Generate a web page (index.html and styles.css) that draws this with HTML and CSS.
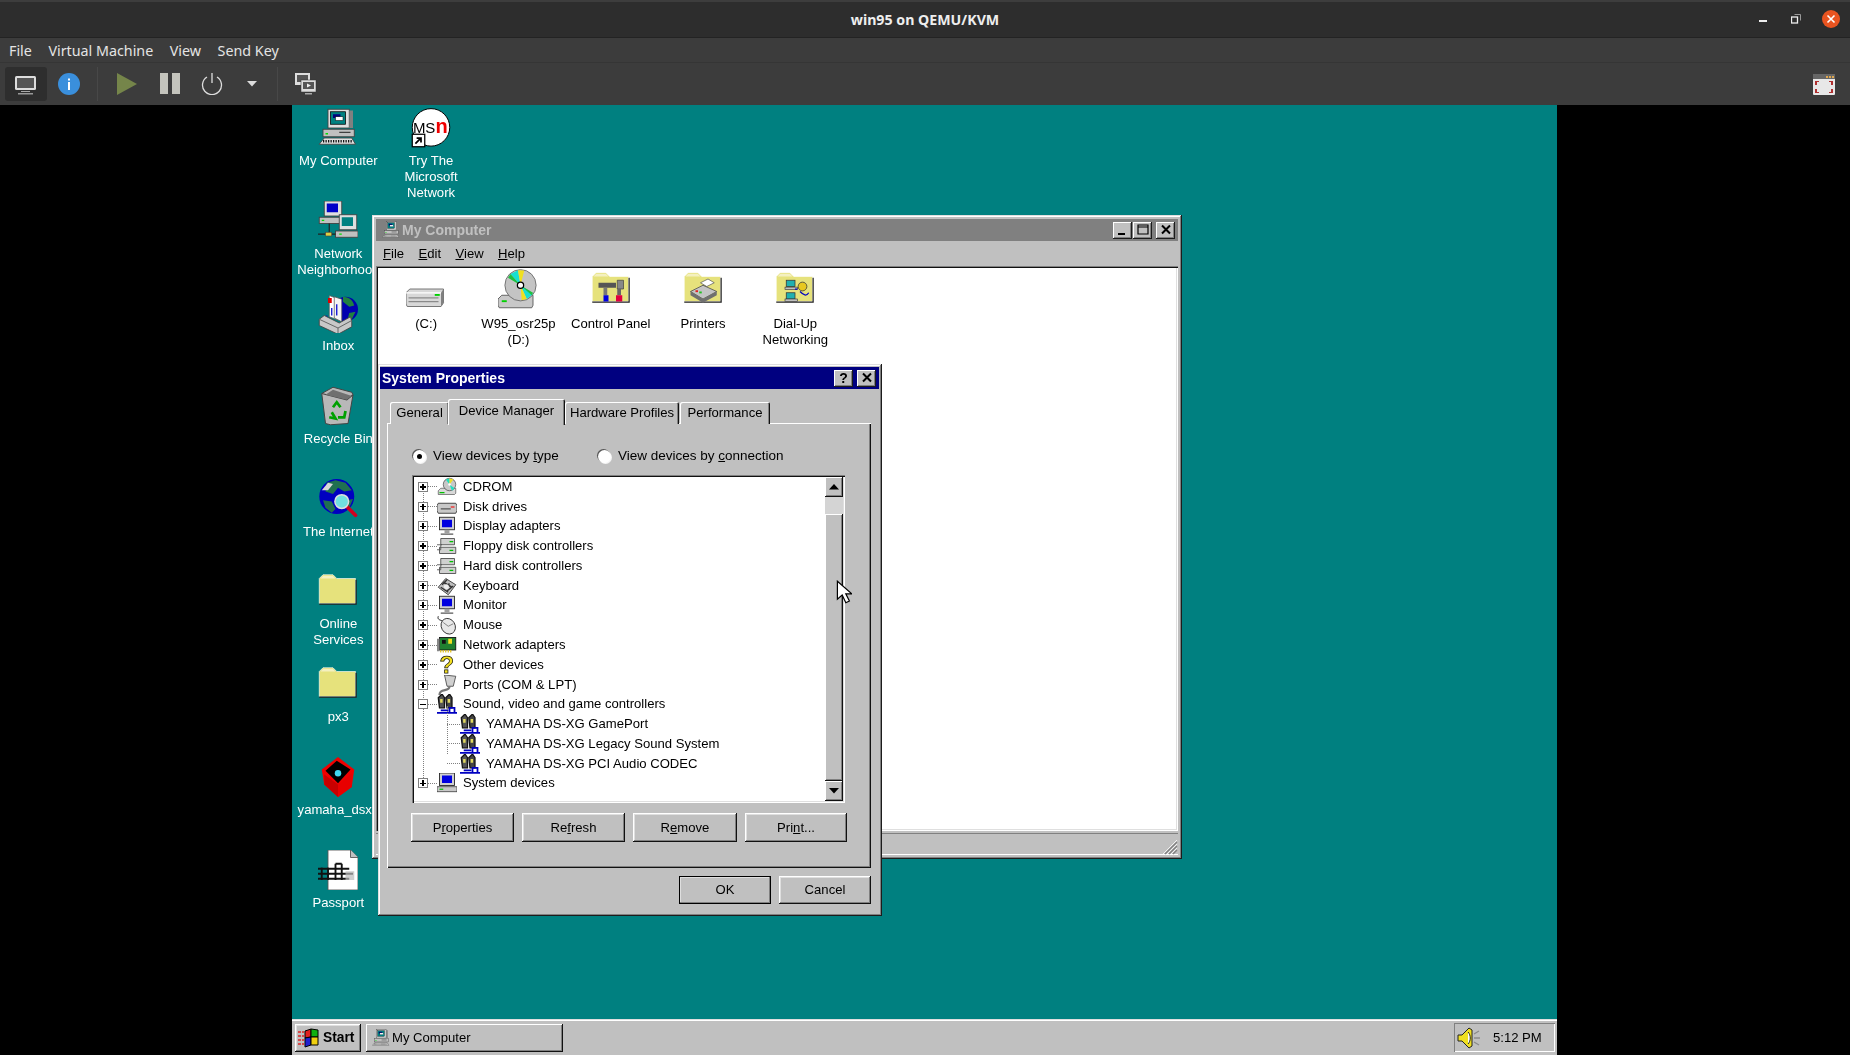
FILE: index.html
```html
<!DOCTYPE html>
<html lang="en">
<head>
    <meta charset="UTF-8">
    <title>win95 on QEMU/KVM</title>
    <link rel="stylesheet" href="styles.css">
</head>
<body>
    <!-- icon sheet -->
    <svg class="icon-sheet" xmlns="http://www.w3.org/2000/svg">
        <symbol id="i-computer" viewBox="0 0 32 32">
            <rect x="8" y="1" width="17" height="15" fill="#dfdfdf" stroke="#404040" stroke-width=".7"/>
            <rect x="25" y="2" width="3" height="14" fill="#808080"/>
            <rect x="10" y="3" width="12" height="10" fill="#008080" stroke="#000" stroke-width=".6"/>
            <rect x="12" y="5" width="6" height="3" fill="#000080"/>
            <rect x="14" y="7" width="6" height="3" fill="#fff" stroke="#000" stroke-width=".4"/>
            <rect x="4" y="17" width="25" height="6" fill="#c0c0c0" stroke="#404040" stroke-width=".7"/>
            <rect x="6" y="20" width="2" height="1.2" fill="#00e000"/>
            <rect x="17" y="19" width="9" height="1" fill="#404040"/>
            <path d="M5 24h22l3 5H1z" fill="#dfdfdf" stroke="#404040" stroke-width=".7"/>
            <path d="M4 26.6h23" stroke="#111" stroke-width="2" stroke-dasharray="1 1"/>
        </symbol>
        <symbol id="i-network" viewBox="0 0 32 32">
            <rect x="5" y="0" width="14" height="12" fill="#dfdfdf" stroke="#404040" stroke-width=".7"/>
            <rect x="7" y="2" width="9" height="7" fill="#0000c8"/>
            <rect x="1" y="13" width="18" height="5" fill="#c0c0c0" stroke="#404040" stroke-width=".7"/>
            <rect x="3" y="15" width="2" height="1" fill="#00e000"/>
            <rect x="17" y="11" width="14" height="12" fill="#dfdfdf" stroke="#404040" stroke-width=".7"/>
            <rect x="19" y="13" width="9" height="7" fill="#008080"/>
            <rect x="14" y="24" width="18" height="5" fill="#c0c0c0" stroke="#404040" stroke-width=".7"/>
            <rect x="17" y="26" width="2" height="1" fill="#00e000"/>
            <path d="M9 18v8M0 26.500h14" stroke="#222" stroke-width="1"/>
            <rect x="6" y="25" width="5" height="3" fill="#e0d040" stroke="#444" stroke-width=".5"/>
        </symbol>
        <symbol id="i-inbox" viewBox="0 0 32 32">
            <circle cx="22" cy="13" r="10" fill="#0000b0"/>
            <path d="M20 3c5 0 8 3 9 7l-4 1-5-4zM25 16l5-1-3 6-3-1z" fill="#208040"/>
            <path d="M9 2l8 3v17l-8-3z" fill="#fff" stroke="#555" stroke-width=".6"/>
            <path d="M13 3l6 2v18l-6-3z" fill="#f4f4f4" stroke="#555" stroke-width=".6"/>
            <path d="M8 4h3v4H8z" fill="#e00000"/>
            <path d="M15 9v9M11 12v6M7 18v5" stroke="#0000d0" stroke-width="1"/>
            <path d="M1 21l4-3 12 6 9-5 1 4v4l-11 6-15-7z" fill="#c8c8c8" stroke="#444" stroke-width=".7"/>
            <path d="M1 21l15 7 11-6M16 28v4" fill="none" stroke="#666" stroke-width=".8"/>
        </symbol>
        <symbol id="i-recycle" viewBox="0 0 32 32">
            <path d="M3 6L12 1l15 4 1 2-4 23-14 1-4-1z" fill="#b8b8b8" stroke="#444" stroke-width=".8"/>
            <path d="M3 6l20 5 5-4" fill="none" stroke="#444" stroke-width="1"/>
            <path d="M6 7l17 4 4-3-15-5z" fill="#707070"/>
            <path d="M12 17l3-4 3 4M22 20l-1 5-5 0M11 21l3 5-5-1" fill="none" stroke="#00a000" stroke-width="2.200"/>
        </symbol>
        <symbol id="i-internet" viewBox="0 0 32 32">
            <circle cx="15" cy="14" r="14" fill="#0000c0"/>
            <path d="M7 3l7-2 8 2 5 6-6 1-5-3-4 5-6-2zM4 17l7 1 3 6-3 3-5-4zM23 17l5-1-3 7-3-2z" fill="#207050"/>
            <path d="M3 9l5-6 4 1-4 5z" fill="#d8d8d8"/>
            <path d="M23 22l7 7" stroke="#d00020" stroke-width="3" stroke-linecap="round"/>
            <circle cx="19" cy="18" r="5.500" fill="#70e0e0" stroke="#ddd" stroke-width="1.200"/>
        </symbol>
        <symbol id="i-folder" viewBox="0 0 32 32">
            <path d="M1 6l3-3h8l3 3h15v20H1z" fill="#e6e27c" stroke="#fff" stroke-width=".5"/>
            <path d="M1 26h29V7h1v20H1z" fill="#222"/>
            <path d="M2 6l2-2h8l2 2z" fill="#f4f0c0"/>
        </symbol>
        <symbol id="i-yamaha" viewBox="0 0 32 32">
            <path d="M16 0l13 10-2 14-11 8L5 22 3 10z" fill="#f00000"/>
            <path d="M15 3l11 7-10 11L6 11z" fill="#000"/>
            <path d="M5 14l11 8v10L5 22z" fill="#c80000"/>
            <path d="M27 13l-11 9v10l11-8z" fill="#e80000"/>
            <circle cx="16" cy="13" r="2.600" fill="#40d8f0"/>
        </symbol>
        <symbol id="i-passport" viewBox="0 0 32 32">
            <path d="M8 0h18l6 6v26H8z" fill="#fff" stroke="#555" stroke-width=".7"/>
            <path d="M26 0v6h6" fill="#c0c0c0" stroke="#555" stroke-width=".7"/>
            <path d="M0 15h25M0 19h28M0 23h25M3 14v10M8 14v10M14 11v13M19 11v13M14 11h5" fill="none" stroke="#111" stroke-width="1.500"/>
            <path d="M22 17h7v7h-7z" fill="#bbb" opacity=".7"/>
        </symbol>
        <symbol id="i-hdd" viewBox="0 0 32 32">
            <g transform="translate(-1 6)">
                <path d="M1 13l3-3h27v11l-2 3H2l-1-2z" fill="#d8d8d8" stroke="#666" stroke-width=".7"/>
                <path d="M31 10v11l-2 3V13z" fill="#808080"/>
                <path d="M1 13h28" stroke="#fff" stroke-width="1"/>
                <path d="M3 17h24M3 20h24" stroke="#8a8a8a" stroke-width="1"/>
                <rect x="24" y="14" width="4" height="1.500" fill="#00d000"/>
            </g>
        </symbol>
        <symbol id="i-cd" viewBox="0 0 32 32">
            <path d="M0 24l3-3h25v8l-1 2H1l-1-2z" fill="#c8c8c8" stroke="#555" stroke-width=".7"/>
            <rect x="3" y="25" width="4" height="1.500" fill="#00d000"/>
            <circle cx="18" cy="13" r="12.500" fill="#c4c4c4" stroke="#555" stroke-width=".6"/>
            <path d="M18 13L10 4l6-3zM18 13l5 11 5-4z" fill="#18e0d0"/>
            <path d="M18 13l-2-12 5 .2zM18 13l1 12 4-1z" fill="#f0e020"/>
            <path d="M18 13L10 4l-2 3zM18 13l9 8 1-2z" fill="#20c040"/>
            <circle cx="18" cy="13" r="2.500" fill="#fff" stroke="#000" stroke-width="1"/>
        </symbol>
        <symbol id="i-cpanel" viewBox="0 0 32 32">
            <use href="#i-folder"/>
            <g transform="translate(0 -2)">
                <path d="M6 13h14v4H6z" fill="#555"/>
                <path d="M10 17h3v6h-3z" fill="#777"/>
                <path d="M21 11h5v7h-5z" fill="#888" stroke="#333" stroke-width=".5"/>
                <rect x="10" y="23" width="4" height="5" fill="#0000e0"/>
                <rect x="21" y="18" width="3" height="5" fill="#666"/>
                <rect x="20" y="23" width="5" height="5" fill="#e00040"/>
            </g>
        </symbol>
        <symbol id="i-printer" viewBox="0 0 32 32">
            <use href="#i-folder"/>
            <g transform="translate(0 -2)">
                <path d="M14 13l6-3 5 3-6 3z" fill="#fff" stroke="#444" stroke-width=".5"/>
                <path d="M6 20l10-5 11 5-11 6z" fill="#c4c4c4" stroke="#444" stroke-width=".6"/>
                <path d="M6 20v3l10 6 11-6v-3l-11 6z" fill="#707070"/>
                <rect x="10" y="19" width="2" height="1.500" fill="#e02020"/>
                <rect x="13" y="20" width="2" height="1.500" fill="#20c020"/>
            </g>
        </symbol>
        <symbol id="i-dialup" viewBox="0 0 32 32">
            <use href="#i-folder"/>
            <g transform="translate(0 -2)">
                <rect x="9" y="11" width="7" height="5" fill="#20b0b0" stroke="#333" stroke-width=".6"/>
                <rect x="8" y="16.500" width="10" height="2" fill="#c0c0c0" stroke="#333" stroke-width=".5"/>
                <rect x="9" y="21" width="7" height="5" fill="#20b0b0" stroke="#333" stroke-width=".6"/>
                <rect x="8" y="26" width="10" height="2" fill="#c0c0c0" stroke="#333" stroke-width=".5"/>
                <circle cx="22" cy="16" r="3.500" fill="#e8c820" stroke="#333" stroke-width=".6"/>
                <path d="M20 20c3 3 5 4 7 1M18 18h-2" fill="none" stroke="#0000c0" stroke-width="1"/>
            </g>
        </symbol>

        <symbol id="s-cdrom" viewBox="0 0 16 16">
            <path d="M1 11l2-2h12v4l-1 1H1z" fill="#d8d8d8" stroke="#444" stroke-width=".5"/>
            <rect x="2" y="12" width="4" height="1" fill="#00c000"/>
            <circle cx="10" cy="6" r="5" fill="#c8c8c8" stroke="#333" stroke-width=".5"/>
            <path d="M10 6L7 2l3-1zM10 6l2 5 2-2z" fill="#20e0c0"/>
            <path d="M10 6l0-5 3 1z" fill="#f0e020"/>
            <circle cx="10" cy="6" r="1" fill="#fff"/>
        </symbol>
        <symbol id="s-disk" viewBox="0 0 16 16">
            <path d="M1 5h14l1 2v4l-1 2H1l-1-2V7z" fill="#c8c8c8" stroke="#333" stroke-width=".7"/>
            <path d="M3 9.500h8" stroke="#555" stroke-width="1"/>
            <rect x="11" y="7.500" width="3" height="1" fill="#f02020"/>
        </symbol>
        <symbol id="s-monitor" viewBox="0 0 16 16">
            <rect x="2" y="1" width="12" height="10" fill="#d0d0d0" stroke="#222" stroke-width=".7"/>
            <rect x="4" y="3" width="8" height="6" fill="#0000e0"/>
            <path d="M3 14h10v1H3z" fill="#555"/>
            <path d="M6 11h4v3H6z" fill="#a0a0a0"/>
        </symbol>
        <symbol id="s-floppy" viewBox="0 0 16 16">
            <path d="M3 2h11v5H3z" fill="#d0d0d0" stroke="#333" stroke-width=".6"/>
            <path d="M2 9h13v5H2z" fill="#d0d0d0" stroke="#333" stroke-width=".6"/>
            <path d="M0 7h4M0 11h3M3 7v4" stroke="#555" stroke-width=".7"/>
            <rect x="10" y="4" width="3" height="1" fill="#00c000"/>
            <rect x="10" y="11" width="3" height="1" fill="#00c000"/>
        </symbol>
        <symbol id="s-keyboard" viewBox="0 0 16 16">
            <path d="M1 9l6-7 8 5-6 8z" fill="#c0c0c0" stroke="#333" stroke-width=".7"/>
            <path d="M4 7l4-4M6 10l4-4M8 12l5-4M3 9l6 4M5 5l7 4" stroke="#333" stroke-width="1.200"/>
            <circle cx="7.500" cy="8.500" r="2" fill="#eee"/>
        </symbol>
        <symbol id="s-mouse" viewBox="0 0 16 16">
            <path d="M1 1c-1 3 2 3 4 4" fill="none" stroke="#222" stroke-width=".8"/>
            <ellipse cx="9" cy="9" rx="5.500" ry="6.500" transform="rotate(-30 9 9)" fill="#e8e8e8" stroke="#333" stroke-width=".7"/>
            <path d="M5 6l4 3 4-2" fill="none" stroke="#666" stroke-width=".6"/>
        </symbol>
        <symbol id="s-adapter" viewBox="0 0 16 16">
            <rect x="2" y="2" width="13" height="10" fill="#208030" stroke="#111" stroke-width=".7"/>
            <rect x="4" y="4" width="3" height="3" fill="#111"/>
            <rect x="9" y="3" width="3" height="4" fill="#f0e020"/>
            <path d="M3 12v2M5 12v2M7 12v2M9 12v2M11 12v2" stroke="#e0c020" stroke-width="1"/>
            <rect x="0" y="3" width="2" height="10" fill="#888"/>
        </symbol>
        <symbol id="s-ports" viewBox="0 0 16 16">
            <path d="M6 0l9 1-2 8h-5z" fill="#d0d0d0" stroke="#333" stroke-width=".6"/>
            <path d="M10 9c0 5-8 1-8 7" fill="none" stroke="#777" stroke-width="1.800"/>
        </symbol>
        <symbol id="s-sound" viewBox="0 0 16 16">
            <path d="M1 3l3-3 2 3v8H2z" fill="#555" stroke="#111" stroke-width="1"/>
            <path d="M7 3l3-3 2 3v8H8z" fill="#444" stroke="#111" stroke-width="1"/>
            <path d="M2.500 4h2v3h-2zM8.500 4h2v3h-2z" fill="#e0d860"/>
            <path d="M0 15h16M3 13h6M10 11h4v4h-4z" fill="none" stroke="#0000c0" stroke-width="1.400"/>
        </symbol>
        <symbol id="s-system" viewBox="0 0 16 16">
            <rect x="2" y="0" width="12" height="10" fill="#d0d0d0" stroke="#222" stroke-width=".7"/>
            <rect x="4" y="2" width="8" height="6" fill="#0000e0"/>
            <rect x="0" y="11" width="16" height="4" fill="#c8c8c8" stroke="#333" stroke-width=".6"/>
            <rect x="2" y="12.500" width="3" height="1" fill="#00c000"/>
        </symbol>

        <symbol id="w-min" viewBox="0 0 16 14"><rect x="3" y="10" width="7" height="2" fill="#000"/></symbol>
        <symbol id="w-max" viewBox="0 0 16 14"><path d="M3 2h10v9H3zM3.500 4h9" fill="none" stroke="#000" stroke-width="1.200"/></symbol>
        <symbol id="w-close" viewBox="0 0 16 14"><path d="M4 2.500l8 8M12 2.500l-8 8" stroke="#000" stroke-width="2"/></symbol>
    </svg>

    <div class="app">
        <header class="titlebar">
            <span class="app-title">win95 on QEMU/KVM</span>
            <div class="win-ctl">
                <svg class="ctl-min" width="10" height="2"><rect width="8" height="2" fill="#eee"/></svg>
                <svg class="ctl-restore" width="10" height="10"><path d="M3.500 .5H9.500V6.500" fill="none" stroke="#999"/><rect x=".5" y="3" width="6" height="6" fill="none" stroke="#eee" stroke-width="1.300"/></svg>
                <svg class="ctl-close" width="18" height="18"><circle cx="9" cy="9" r="9" fill="#e95420"/><path d="M5.500 5.500l7 7M12.500 5.500l-7 7" stroke="#fff" stroke-width="1.600"/></svg>
            </div>
        </header>
        <nav class="menubar">
            <span>File</span><span>Virtual Machine</span><span>View</span><span>Send Key</span>
        </nav>
        <div class="toolbar">
            <div class="tool tool-active">
                <svg class="tool-screen" width="24" height="22" viewBox="0 0 24 22"><rect x="1" y="2" width="21" height="14" rx="1.500" fill="#ddd"/><rect x="3" y="4" width="17" height="10" fill="#555"/><rect x="7" y="17" width="9" height="1" fill="#aaa"/><rect x="4" y="19" width="15" height="1.500" fill="#999"/></svg>
            </div>
            <div class="tool tool-info">
                <svg width="24" height="24"><circle cx="12" cy="12" r="11" fill="#3a8fdc"/><rect x="11" y="10" width="2" height="8" fill="#fff"/><rect x="11" y="6.500" width="2" height="2" fill="#fff"/></svg>
            </div>
            <i class="tool-sep"></i>
            <svg class="tool-play" width="22" height="24"><path d="M1 1l20 11L1 23z" fill="#75854a"/></svg>
            <svg class="tool-pause" width="21" height="22"><rect width="8" height="21" fill="#c4c4bd"/><rect x="12" width="8" height="21" fill="#c4c4bd"/></svg>
            <svg class="tool-power" width="22" height="22"><path d="M6 4a9.500 9.500 0 1 0 10 0" fill="none" stroke="#ddd" stroke-width="1.300"/><path d="M11 0v10" stroke="#ddd" stroke-width="1.300"/></svg>
            <svg class="tool-caret" width="10" height="6"><path d="M0 0h10L5 5.500z" fill="#ddd"/></svg>
            <i class="tool-sep tool-sep-2"></i>
            <svg class="tool-screens" width="22" height="22"><rect x="0" y="0" width="15" height="12" fill="#ddd"/><rect x="2" y="2" width="11" height="7" fill="#555"/><rect x="6" y="7" width="15" height="12" fill="#ddd" stroke="#333" stroke-width=".5"/><rect x="8" y="9" width="11" height="7" fill="#555"/><path d="M12 10.500l4 2-4 2z" fill="#eee"/><rect x="10" y="20" width="7" height="1.500" fill="#aaa"/></svg>
            <svg class="tool-fullscreen" width="22" height="21"><rect width="22" height="21" rx="1" fill="#e8e8e8"/><rect width="22" height="5" fill="#666"/><path d="M13 2h2v2h-2zM16 2h2v2h-2zM19 2h2v2h-2z" fill="#e0a850"/><path d="M2 7h4v1H4v3H2zM16 7h4v4h-2V8h-2zM2 15h2v3h2v1H2zM18 15h2v4h-4v-1h2z" fill="#b03030"/></svg>
        </div>

        <main class="viewer">
            <div class="desktop">
                <div class="desk-icons">
                    <div class="desk-icon"><svg class="icon-lg"><use href="#i-computer"/></svg><span>My Computer</span></div>
                    <div class="desk-icon"><svg class="icon-lg"><use href="#i-network"/></svg><span>Network Neighborhood</span></div>
                    <div class="desk-icon"><svg class="icon-lg"><use href="#i-inbox"/></svg><span>Inbox</span></div>
                    <div class="desk-icon"><svg class="icon-lg"><use href="#i-recycle"/></svg><span>Recycle Bin</span></div>
                    <div class="desk-icon"><svg class="icon-lg"><use href="#i-internet"/></svg><span>The Internet</span></div>
                    <div class="desk-icon"><svg class="icon-lg"><use href="#i-folder"/></svg><span>Online Services</span></div>
                    <div class="desk-icon"><svg class="icon-lg"><use href="#i-folder"/></svg><span>px3</span></div>
                    <div class="desk-icon"><svg class="icon-lg"><use href="#i-yamaha"/></svg><span>yamaha_dsxg</span></div>
                    <div class="desk-icon"><svg class="icon-lg"><use href="#i-passport"/></svg><span>Passport</span></div>
                    <div class="desk-icon">
                        <svg class="icon-lg" viewBox="0 0 32 32">
                            <circle cx="16" cy="15.500" r="15" fill="#fff" stroke="#000" stroke-width=".8"/>
                            <text x="1.500" y="20" font-family="Liberation Sans, sans-serif" font-size="12" textLength="18" lengthAdjust="spacingAndGlyphs" fill="#000">MS</text>
                            <text x="19.500" y="20" font-family="Liberation Sans, sans-serif" font-size="16" font-weight="700" fill="#f00000">n</text>
                            <rect x="1" y="21" width="10" height="10" fill="#fff" stroke="#000"/>
                            <path d="M3.500 28.500l4-4M4.500 24h3.500v3.500" fill="none" stroke="#000" stroke-width="1.400"/>
                        </svg>
                        <span>Try The Microsoft Network</span>
                    </div>
                </div>

                <section class="window mycomp">
                    <div class="caption caption-off">
                        <svg class="caption-icon"><use href="#i-computer"/></svg>
                        <span class="caption-text">My Computer</span>
                        <div class="caption-btns">
                            <button class="cap-btn"><svg><use href="#w-min"/></svg></button>
                            <button class="cap-btn"><svg><use href="#w-max"/></svg></button>
                            <button class="cap-btn cap-close"><svg><use href="#w-close"/></svg></button>
                        </div>
                    </div>
                    <div class="win-menu">
                        <span><u>F</u>ile</span><span><u>E</u>dit</span><span><u>V</u>iew</span><span><u>H</u>elp</span>
                    </div>
                    <div class="client">
                        <div class="file-icon"><svg class="icon-lg"><use href="#i-hdd"/></svg><span>(C:)</span></div>
                        <div class="file-icon"><svg class="icon-lg"><use href="#i-cd"/></svg><span>W95_osr25p (D:)</span></div>
                        <div class="file-icon"><svg class="icon-lg"><use href="#i-cpanel"/></svg><span>Control Panel</span></div>
                        <div class="file-icon"><svg class="icon-lg"><use href="#i-printer"/></svg><span>Printers</span></div>
                        <div class="file-icon"><svg class="icon-lg"><use href="#i-dialup"/></svg><span>Dial-Up Networking</span></div>
                    </div>
                    <div class="statusbar">
                        <div class="status-cell"></div>
                        <svg class="grip" width="16" height="16"><path d="M3 15L15 3M7 15l8-8M11 15l4-4" stroke="#808080" stroke-width="1.300"/><path d="M1 15L15 1M5 15L15 5M9 15l6-6" stroke="#fff" stroke-width=".8"/></svg>
                    </div>
                </section>

                <section class="window sysprops">
                    <div class="caption">
                        <span class="caption-text">System Properties</span>
                        <div class="caption-btns">
                            <button class="cap-btn cap-help">?</button>
                            <button class="cap-btn cap-close"><svg><use href="#w-close"/></svg></button>
                        </div>
                    </div>
                    <div class="tabs">
                        <div class="tab">General</div>
                        <div class="tab tab-on">Device Manager</div>
                        <div class="tab">Hardware Profiles</div>
                        <div class="tab">Performance</div>
                    </div>
                    <div class="tab-panel">
                        <div class="radios">
                            <label class="radio"><i class="radio-dot radio-on"></i><span>View devices by <u>t</u>ype</span></label>
                            <label class="radio"><i class="radio-dot"></i><span>View devices by <u>c</u>onnection</span></label>
                        </div>
                        <div class="tree">
                            <div class="tree-list">
                                <div class="row"><i class="exp"></i><i class="dash"></i><svg class="icon-sm"><use href="#s-cdrom"/></svg><span>CDROM</span></div>
                                <div class="row"><i class="exp"></i><i class="dash"></i><svg class="icon-sm"><use href="#s-disk"/></svg><span>Disk drives</span></div>
                                <div class="row"><i class="exp"></i><i class="dash"></i><svg class="icon-sm"><use href="#s-monitor"/></svg><span>Display adapters</span></div>
                                <div class="row"><i class="exp"></i><i class="dash"></i><svg class="icon-sm"><use href="#s-floppy"/></svg><span>Floppy disk controllers</span></div>
                                <div class="row"><i class="exp"></i><i class="dash"></i><svg class="icon-sm"><use href="#s-floppy"/></svg><span>Hard disk controllers</span></div>
                                <div class="row"><i class="exp"></i><i class="dash"></i><svg class="icon-sm"><use href="#s-keyboard"/></svg><span>Keyboard</span></div>
                                <div class="row"><i class="exp"></i><i class="dash"></i><svg class="icon-sm"><use href="#s-monitor"/></svg><span>Monitor</span></div>
                                <div class="row"><i class="exp"></i><i class="dash"></i><svg class="icon-sm"><use href="#s-mouse"/></svg><span>Mouse</span></div>
                                <div class="row"><i class="exp"></i><i class="dash"></i><svg class="icon-sm"><use href="#s-adapter"/></svg><span>Network adapters</span></div>
                                <div class="row"><i class="exp"></i><i class="dash"></i>
                                    <svg class="icon-sm" viewBox="0 0 16 16"><text x="2" y="14.500" font-family="Liberation Sans, sans-serif" font-size="19" font-weight="700" fill="#f4e020" stroke="#111" stroke-width=".6">?</text></svg>
                                    <span>Other devices</span></div>
                                <div class="row"><i class="exp"></i><i class="dash"></i><svg class="icon-sm"><use href="#s-ports"/></svg><span>Ports (COM &amp; LPT)</span></div>
                                <div class="row"><i class="exp exp-open"></i><i class="dash"></i><svg class="icon-sm"><use href="#s-sound"/></svg><span>Sound, video and game controllers</span></div>
                                <div class="children">
                                    <div class="row row-child"><i class="dash"></i><svg class="icon-sm"><use href="#s-sound"/></svg><span>YAMAHA DS-XG GamePort</span></div>
                                    <div class="row row-child"><i class="dash"></i><svg class="icon-sm"><use href="#s-sound"/></svg><span>YAMAHA DS-XG Legacy Sound System</span></div>
                                    <div class="row row-child"><i class="dash"></i><svg class="icon-sm"><use href="#s-sound"/></svg><span>YAMAHA DS-XG PCI Audio CODEC</span></div>
                                </div>
                                <div class="row"><i class="exp"></i><i class="dash"></i><svg class="icon-sm"><use href="#s-system"/></svg><span>System devices</span></div>
                            </div>
                            <div class="scrollbar">
                                <div class="scroll-btn"><svg width="10" height="6"><path d="M5 0l5 5.500H0z" fill="#000"/></svg></div>
                                <div class="scroll-track"></div>
                                <div class="scroll-thumb"></div>
                                <div class="scroll-btn scroll-btn-down"><svg width="10" height="6"><path d="M0 0h10L5 5.500z" fill="#000"/></svg></div>
                            </div>
                        </div>
                        <div class="tree-btns">
                            <button class="btn">P<u>r</u>operties</button>
                            <button class="btn">Re<u>f</u>resh</button>
                            <button class="btn">R<u>e</u>move</button>
                            <button class="btn">Pri<u>n</u>t...</button>
                        </div>
                    </div>
                    <div class="dlg-btns">
                        <button class="btn btn-default">OK</button>
                        <button class="btn">Cancel</button>
                    </div>
                </section>

                <footer class="taskbar">
                    <button class="btn start-btn">
                        <svg width="22" height="20" viewBox="0 0 22 20"><path d="M0 4h6M0 8h6M0 12h6M0 16h6" stroke="#e02020" stroke-width="1.500" stroke-dasharray="3 1"/><path d="M7 3l6-2v8l-6 1z" fill="#e02020" stroke="#000"/><path d="M13 1l7 1v7l-7 0z" fill="#10b010" stroke="#000"/><path d="M7 10l6-1v8l-6 2z" fill="#2020d0" stroke="#000"/><path d="M13 9h7v8l-7 0z" fill="#f0d010" stroke="#000"/></svg>
                        <span>Start</span>
                    </button>
                    <button class="btn task-btn">
                        <svg class="caption-icon"><use href="#i-computer"/></svg>
                        <span>My Computer</span>
                    </button>
                    <div class="tray">
                        <svg width="24" height="24" viewBox="0 0 24 24"><path d="M1 9h4l7-7 3 2v16l-3 2-7-7H1z" fill="#f0e020" stroke="#222" stroke-width="1"/><path d="M11 6c3 3 3 9 0 12" fill="#fff" stroke="#222" stroke-width="1"/><path d="M17 8l5-3M17 12h6M17 16l5 3" stroke="#8a8a8a" stroke-width="1.300"/></svg>
                        <span class="clock">5:12 PM</span>
                    </div>
                </footer>

                <svg class="cursor" width="16" height="24" viewBox="0 0 13 20"><path d="M1 1v15l4-3.500 3 6.500 3-1.500-3-6h5z" fill="#fff" stroke="#000" stroke-width="1"/></svg>
            </div>
        </main>
    </div>
</body>
</html>
```

FILE: styles.css
```css
* {
    margin: 0;
    padding: 0;
    box-sizing: border-box;
}

body {
    background: #000;
    font-family: "Liberation Sans", Arial, sans-serif;
    overflow: hidden;
}

.icon-sheet {
    position: absolute;
    width: 0;
    height: 0;
}

.app {
    width: 1850px;
    height: 1055px;
    display: flex;
    flex-direction: column;
}

/* host window chrome */
.titlebar {
    height: 38px;
    background: #2d2d2d;
    border-top: 2px solid #3d3d3d;
    border-bottom: 1px solid #232323;
    display: flex;
    align-items: center;
    justify-content: center;
    position: relative;
}

.app-title {
    color: #eee;
    font-family: "Noto Sans", sans-serif;
    font-weight: 700;
    font-size: 14.2px;
}

.win-ctl {
    position: absolute;
    right: 10px;
    top: 8px;
    display: flex;
    align-items: center;
    gap: 21px;
}

.ctl-min {
    margin-top: 4px;
    margin-right: 1px;
}

.menubar {
    height: 25px;
    background: #3c3c3c;
    border-bottom: 1px solid #353535;
    color: #e4e4e4;
    font-family: "Noto Sans", sans-serif;
    font-size: 14.3px;
    display: flex;
    align-items: center;
    gap: 16.5px;
    padding-left: 9px;
}

.toolbar {
    height: 42px;
    background: #3c3c3c;
    display: flex;
    align-items: center;
    padding-left: 5px;
    position: relative;
}

.tool {
    width: 42px;
    height: 34px;
    display: flex;
    align-items: center;
    justify-content: center;
    border-radius: 3px;
}

.tool-active {
    background: #2e2e2e;
}

.tool-screen {
    margin-top: 2px;
}

.tool-info {
    margin-left: 1px;
}

.tool-sep {
    width: 1px;
    height: 34px;
    background: #484848;
    margin-left: 7px;
}

.tool-play {
    margin-left: 18px;
}

.tool-pause {
    margin-left: 22px;
}

.tool-power {
    margin-left: 20px;
}

.tool-caret {
    margin-left: 24px;
}

.tool-sep-2 {
    margin-left: 20px;
}

.tool-screens {
    margin-left: 17px;
}

.tool-fullscreen {
    margin-left: auto;
    margin-right: 15px;
}

.viewer {
    flex: 1;
    background: #000;
    padding-left: 292px;
    min-height: 0;
}

/* guest desktop */
.desktop {
    width: 1265px;
    height: 950px;
    background: #008080;
    position: relative;
    overflow: hidden;
    color: #000;
    font-size: 13.1px;
    line-height: 16px;
    filter: blur(.35px);
}

.desk-icons {
    display: grid;
    grid-auto-flow: column;
    grid-template-rows: repeat(9, 92.7px);
    grid-auto-columns: 92.7px;
    padding-top: 3px;
}

.desk-icon,
.file-icon {
    display: flex;
    flex-direction: column;
    align-items: center;
    text-align: center;
}

.desk-icon {
    color: #fff;
}

.desk-icon span {
    margin-top: 5px;
    width: 88px;
}

.icon-lg {
    width: 40px;
    height: 40px;
    flex: none;
}

.icon-sm {
    width: 20px;
    height: 20px;
    flex: none;
}

.window {
    position: absolute;
    background: #c0c0c0;
    display: flex;
    flex-direction: column;
    box-shadow: inset -1px -1px #1c1c1c, inset 1px 1px #dfdfdf, inset -2px -2px #808080, inset 2px 2px #fff;
    padding: 4px;
}

.mycomp {
    left: 80px;
    top: 110px;
    width: 810px;
    height: 644px;
}

.sysprops {
    left: 86px;
    top: 259px;
    width: 504px;
    height: 552px;
    padding: 3px 3px 0 2px;
}

.caption {
    height: 22px;
    flex: none;
    background: #000080;
    color: #fff;
    display: flex;
    align-items: center;
    padding: 0 3px 0 2px;
    font-weight: 700;
    font-size: 14px;
}

.caption-off {
    background: #808080;
    color: #c0c0c0;
    padding-left: 6px;
}

.caption-icon {
    width: 18px;
    height: 18px;
    margin-right: 2px;
    flex: none;
}

.caption-btns {
    margin-left: auto;
    display: flex;
}

.cap-btn {
    width: 19px;
    height: 17px;
    margin-left: 1px;
    background: #c0c0c0;
    border: none;
    color: #000;
    font: 700 14px "Liberation Sans", sans-serif;
    display: flex;
    align-items: center;
    justify-content: center;
    box-shadow: inset -1px -1px #1c1c1c, inset 1px 1px #fff, inset -2px -2px #808080;
}

.cap-btn svg {
    width: 16px;
    height: 14px;
}

.cap-close {
    margin-left: 4px;
}

.win-menu {
    height: 25px;
    flex: none;
    display: flex;
    align-items: center;
    gap: 14.4px;
    padding-left: 7px;
}

.client {
    flex: 1;
    background: #fff;
    box-shadow: inset 1px 1px #808080, inset 2px 2px #111, inset -1px -1px #fff, inset -2px -2px #dfdfdf;
    display: grid;
    grid-template-columns: repeat(5, 92.3px);
    align-content: start;
    padding: 3px 0 0 4px;
}

.file-icon span {
    margin-top: 7px;
    width: 84px;
}

.statusbar {
    height: 24px;
    flex: none;
    display: flex;
    align-items: flex-end;
    padding-top: 2px;
}

.status-cell {
    flex: 1;
    height: 22px;
    box-shadow: inset 0 1px #808080, inset 0 -1px #fff;
}

.grip {
    flex: none;
    margin-left: -16px;
}

/* dialog tabs */
.tabs {
    height: 24px;
    margin-top: 10px;
    padding-left: 7px;
    display: flex;
    align-items: flex-end;
    flex: none;
    position: relative;
    z-index: 1;
    white-space: nowrap;
}

.tab {
    height: 22px;
    margin-bottom: -1px;
    margin-left: 3px;
    display: flex;
    align-items: center;
    justify-content: center;
    background: #c0c0c0;
    border-radius: 2px 2px 0 0;
    box-shadow: inset 1px 1px #fff, inset -1px 0 #111, inset -2px 0 #808080;
}

.tab:nth-child(1) {
    width: 59px;
}

.tab:nth-child(3) {
    width: 114px;
    margin-left: 0;
}

.tab:nth-child(4) {
    width: 90px;
    margin-left: 1px;
}

.tab-on {
    height: 26px;
    width: 117px;
    margin: 0 0 -2px -1px;
    padding-bottom: 3px;
}

.tab-panel {
    width: 484px;
    height: 445px;
    margin-left: 7px;
    flex: none;
    padding: 25px 26px 0 25px;
    box-shadow: inset 1px 1px #fff, inset -1px -1px #111, inset -2px -2px #808080;
    display: flex;
    flex-direction: column;
}

.radios {
    height: 16px;
    display: flex;
    align-items: center;
    font-size: 13.5px;
}

.radio {
    display: flex;
    align-items: center;
    gap: 7px;
}

.radio:first-child {
    width: 185px;
    margin-left: 1px;
}

.radio-dot {
    width: 13px;
    height: 13px;
    border-radius: 50%;
    background: #fff;
    box-shadow: -1px -1px 0 #555, 1px 1px 0 #f4f4f4;
    position: relative;
}

.radio-on::after {
    content: "";
    position: absolute;
    left: 4px;
    top: 4px;
    width: 5px;
    height: 5px;
    border-radius: 50%;
    background: #000;
}

.tree {
    height: 328px;
    margin-top: 11px;
    background: #fff;
    display: flex;
    box-shadow: inset 1px 1px #808080, inset 2px 2px #111, inset -1px -1px #fff, inset -2px -2px #dfdfdf;
    padding: 2px;
    overflow: hidden;
}

.tree-list {
    flex: 1;
    position: relative;
}

/* vertical line that joins the top level rows */
.tree-list::before {
    content: "";
    position: absolute;
    left: 9px;
    top: 10px;
    height: 297px;
    border-left: 1px dotted #808080;
}

.children {
    position: relative;
}

.children::before {
    content: "";
    position: absolute;
    left: 33px;
    top: -8px;
    height: 48px;
    border-left: 1px dotted #808080;
}

.row {
    height: 19.77px;
    display: flex;
    align-items: center;
    padding-left: 4px;
    position: relative;
    white-space: nowrap;
}

.row span {
    margin-left: 6px;
}

.row-child {
    padding-left: 33px;
}

.row-child .dash {
    width: 13px;
}

.exp {
    width: 10px;
    height: 10px;
    background: #fff;
    border: 1px solid #808080;
    position: relative;
    flex: none;
}

.exp::before,
.exp::after {
    content: "";
    position: absolute;
    background: #000;
}

.exp::before {
    left: 1px;
    top: 3.25px;
    width: 6px;
    height: 1.5px;
}

.exp::after {
    left: 3.25px;
    top: 1px;
    width: 1.5px;
    height: 6px;
}

.exp-open::after {
    display: none;
}

.dash {
    width: 9px;
    flex: none;
    border-top: 1px dotted #808080;
}

.scrollbar {
    width: 18px;
    flex: none;
    display: flex;
    flex-direction: column;
}

.scroll-btn,
.scroll-thumb {
    background: #c0c0c0;
    box-shadow: inset -1px -1px #111, inset 1px 1px #fff, inset -2px -2px #808080;
}

.scroll-btn {
    height: 20px;
    flex: none;
    display: flex;
    align-items: center;
    justify-content: center;
}

.scroll-track {
    height: 17px;
    flex: none;
    background: #d4d4d4;
}

.scroll-thumb {
    flex: 1;
}

.tree-btns {
    display: grid;
    grid-template-columns: 103px 103px 104px 102px;
    gap: 8px;
    margin: 10px -3px 0 -1px;
}

.btn {
    background: #c0c0c0;
    border: none;
    color: #000;
    font: 13.1px/16px "Liberation Sans", Arial, sans-serif;
    height: 29px;
    box-shadow: inset -1px -1px #111, inset 1px 1px #fff, inset -2px -2px #808080, inset 2px 2px #dfdfdf;
}

.dlg-btns {
    display: flex;
    justify-content: flex-end;
    gap: 8px;
    margin-top: 8px;
    padding-right: 8px;
}

.dlg-btns .btn {
    width: 92px;
    height: 28px;
}

.btn-default {
    outline: 1px solid #000;
    outline-offset: -1px;
}

/* taskbar */
.taskbar {
    position: absolute;
    left: 0;
    right: 0;
    bottom: 0;
    height: 36px;
    background: #c0c0c0;
    box-shadow: inset 0 1px #dfdfdf, inset 0 2px #fff;
    display: flex;
    align-items: flex-end;
    padding: 0 2px 3px 3px;
    gap: 5px;
}

.taskbar .btn {
    height: 28px;
    display: flex;
    align-items: center;
}

.start-btn {
    width: 66px;
    padding-left: 3px;
    gap: 3px;
}

.start-btn span {
    font-weight: 700;
    font-size: 13.8px;
}

.task-btn {
    width: 197px;
    padding-left: 6px;
    box-shadow: inset -1px -1px #111, inset 1px 1px #fff, inset -2px -2px #808080;
}

.tray {
    margin-left: auto;
    width: 101px;
    height: 29px;
    display: flex;
    align-items: center;
    padding-left: 3px;
    box-shadow: inset 1px 1px #808080, inset -1px -1px #fff;
}

.clock {
    margin-left: 12px;
}

.cursor {
    position: absolute;
    left: 544px;
    top: 475px;
}
```
